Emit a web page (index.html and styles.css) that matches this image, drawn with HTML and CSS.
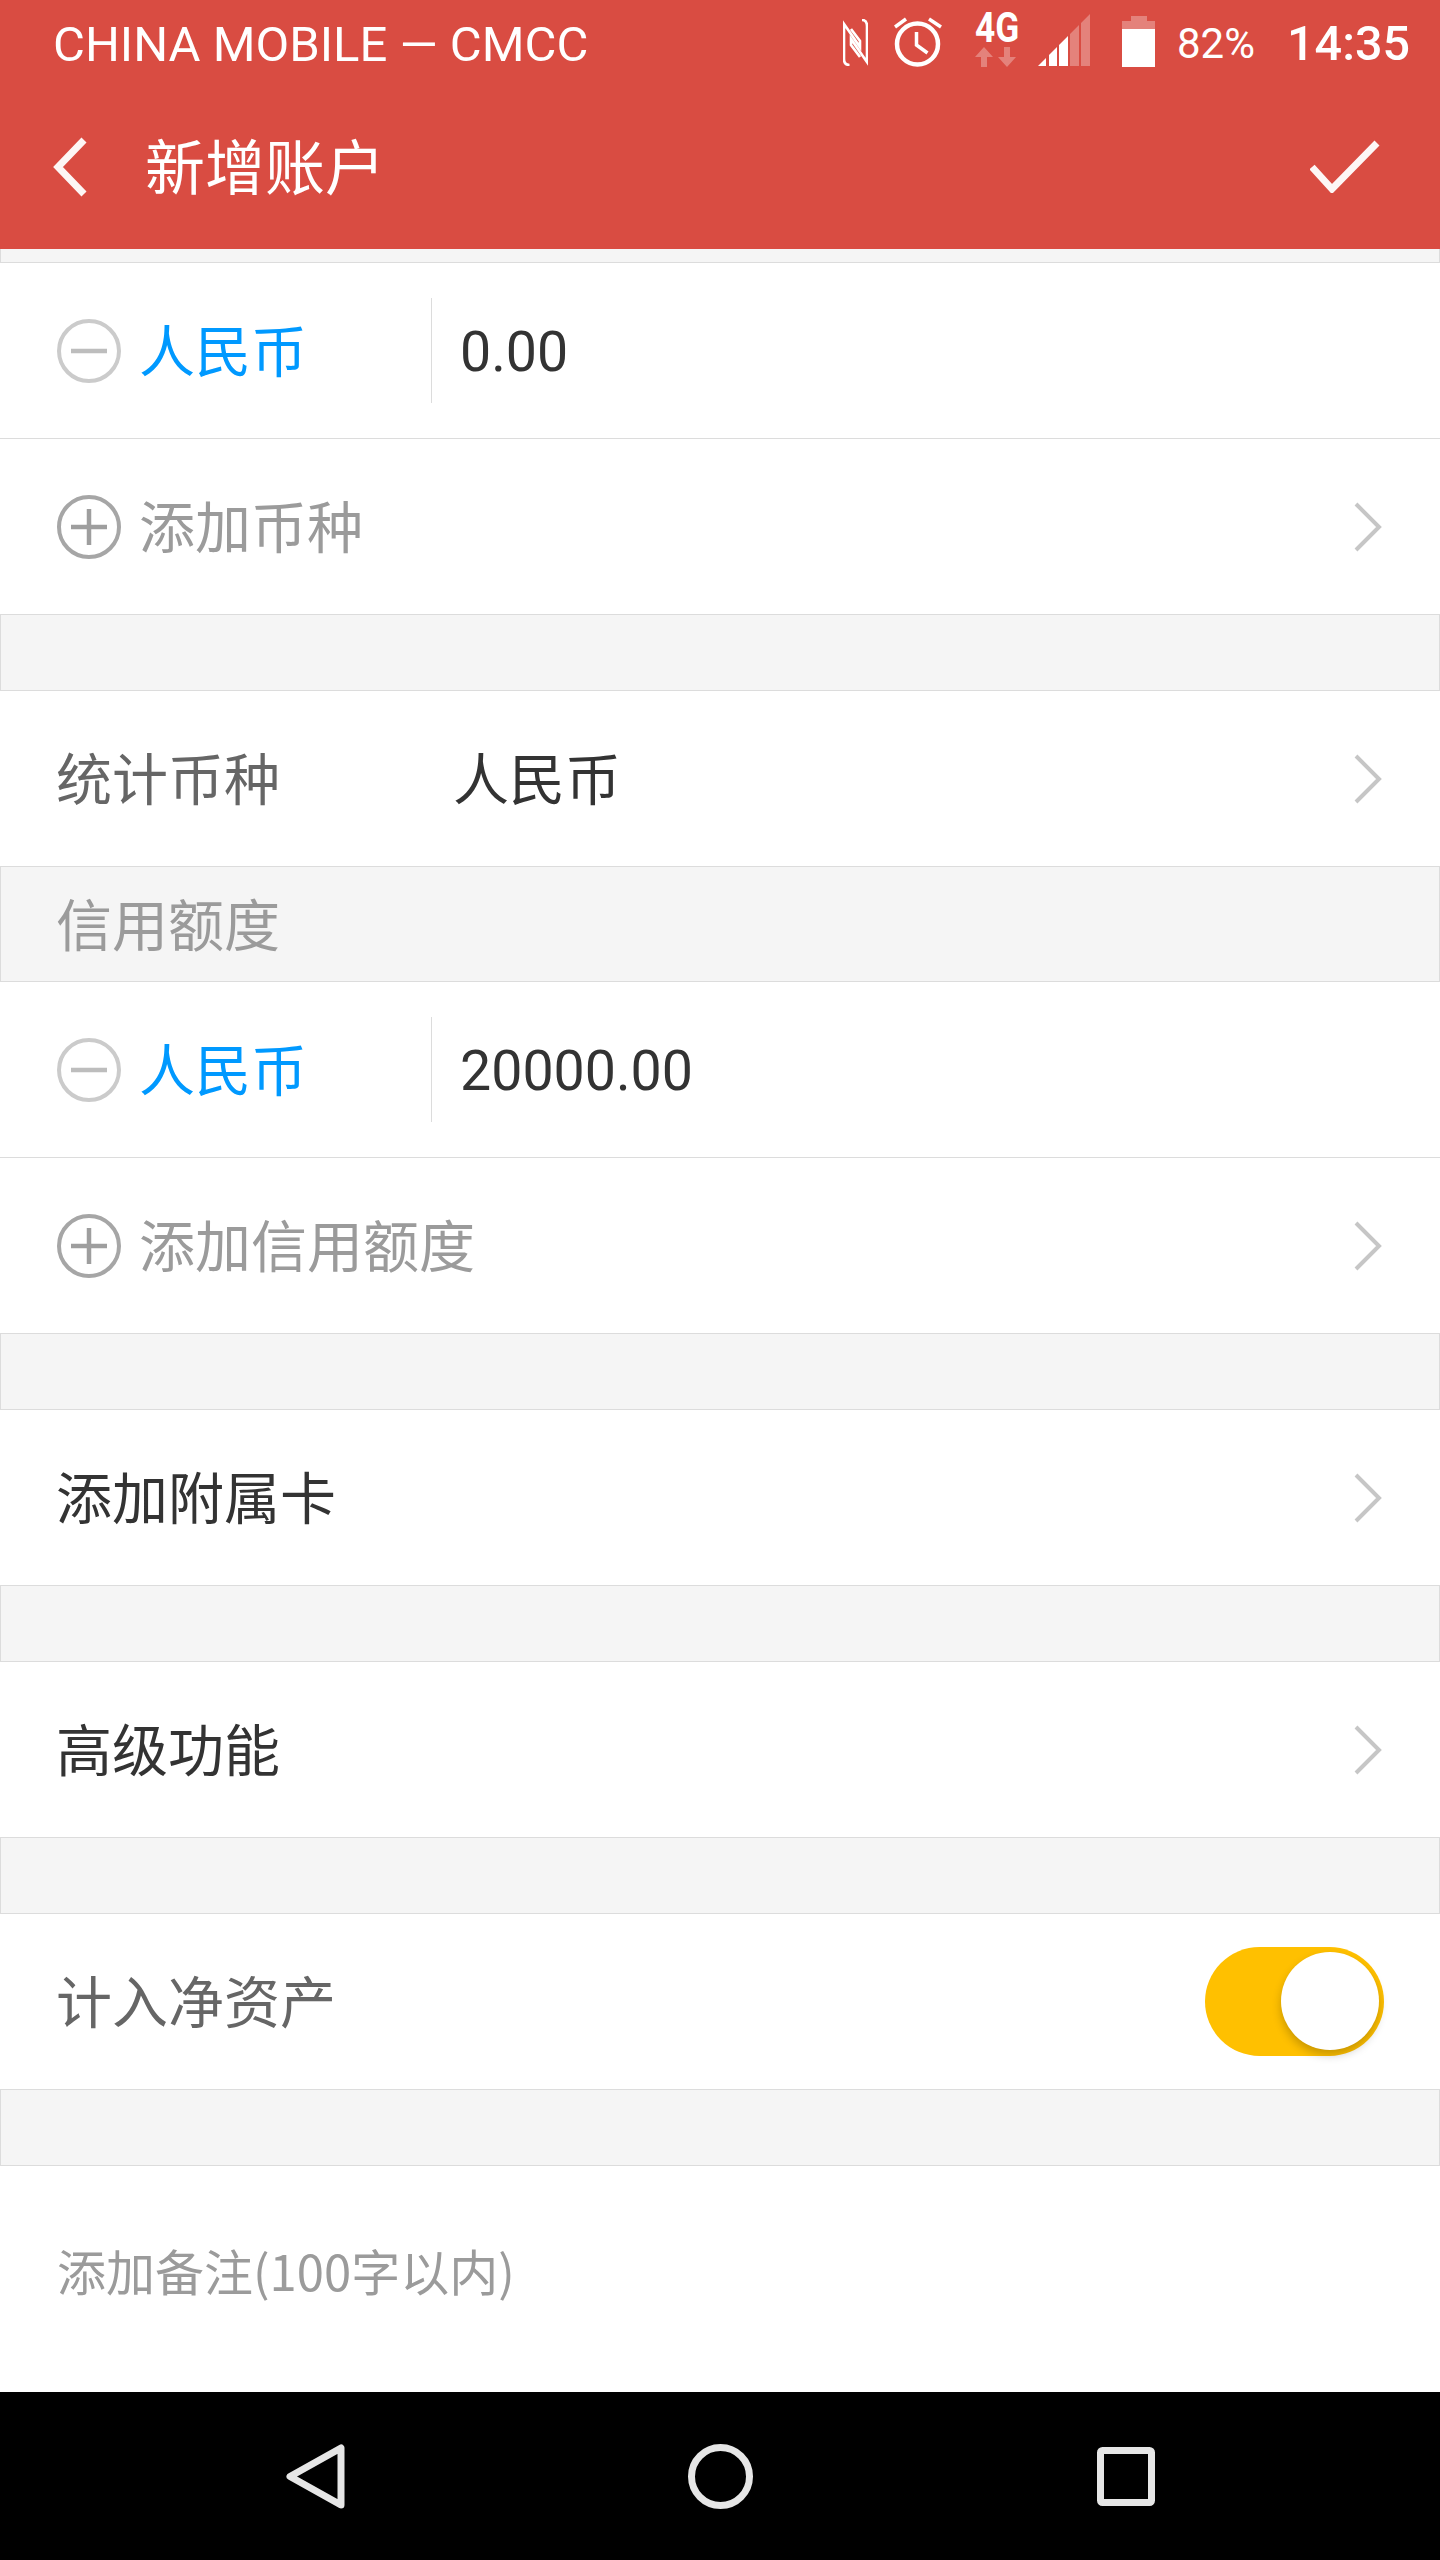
FILE: index.html
```html
<!DOCTYPE html>
<html lang="zh-CN">
<head>
<meta charset="utf-8">
<title>新增账户</title>
<link rel="stylesheet" href="styles.css">
</head>
<body>
<svg class="defs" width="0" height="0" aria-hidden="true">
  <symbol id="chev" viewBox="0 0 30 52"><path d="M3 3L26 26L3 49" fill="none" stroke="#c6c6c6" stroke-width="4"/></symbol>
  <symbol id="minus" viewBox="0 0 64 64"><circle cx="32" cy="32" r="30" fill="none" stroke="#cbcbcb" stroke-width="4"/><path d="M14 32H50" stroke="#bdbdbd" stroke-width="4.500"/></symbol>
  <symbol id="plus" viewBox="0 0 64 64"><circle cx="32" cy="32" r="30" fill="none" stroke="#a6a6a6" stroke-width="4"/><path d="M14 32H50M32 14V50" stroke="#9e9e9e" stroke-width="4.500"/></symbol>
</svg>
<header class="appbar">
  <div class="status">
    <span class="carrier">CHINA MOBILE — CMCC</span>
    <div class="status-right">
      <svg class="ic-nfc" viewBox="0 0 25 47"><path d="M6.500 46Q1 46 1 40V5L17 28V22L8 10M19 1Q24 1 24 7V43L8 20V26L17 38" fill="none" stroke="#fff" stroke-width="2.600"/></svg>
      <svg class="ic-alarm" viewBox="0 0 48 50"><circle cx="23.500" cy="27" r="20.500" fill="none" stroke="#fff" stroke-width="4.500"/><path d="M22.500 15V28L33.500 36M1 10L12 2M35 2L47 10" fill="none" stroke="#fff" stroke-width="3.500"/></svg>
      <div class="net">
        <span class="net-label">4G</span>
        <svg class="ic-arrows" viewBox="0 0 41 20"><path d="M9 0L18 10H12V20H6V10H0ZM32 20L41 10H35V0H29V10H23Z" fill="#fff" opacity=".3"/></svg>
      </div>
      <svg class="ic-signal" viewBox="0 0 52 52"><path d="M0 52L8 44V52ZM11 52V41L19 33V52ZM21 52V31L30 22V52Z" fill="#fff"/><path d="M32 52V20L41 11V52ZM43 52V9L52 0V52Z" fill="#fff" opacity=".3"/></svg>
      <svg class="ic-battery" viewBox="0 0 33 51"><path d="M9 0H25V5H33V13H0V5H9Z" fill="#fff" opacity=".3"/><path d="M0 13H33V51H0Z" fill="#fff"/></svg>
      <span class="pct">82%</span>
      <span class="clock">14:35</span>
    </div>
  </div>
  <div class="toolbar">
    <svg class="ic-back" viewBox="0 0 34 60"><path d="M31 3L5 30L31 57" fill="none" stroke="#fff" stroke-width="7" opacity=".95"/></svg>
    <h1 class="title">新增账户</h1>
    <svg class="ic-check" viewBox="0 0 70 53"><path d="M2 27L22 49L67 3" fill="none" stroke="#fff" stroke-width="7" opacity=".95"/></svg>
  </div>
</header>
<main class="form">
  <div class="band band-top"></div>
  <div class="row">
    <svg class="ic-round"><use href="#minus"/></svg>
    <span class="cur">人民币</span>
    <span class="val">0.00</span>
  </div>
  <div class="row row-sep">
    <svg class="ic-round"><use href="#plus"/></svg>
    <span class="hint">添加币种</span>
    <svg class="chev"><use href="#chev"/></svg>
  </div>
  <div class="band"></div>
  <div class="row">
    <span class="label mid wide">统计币种</span>
    <span class="label dark">人民币</span>
    <svg class="chev"><use href="#chev"/></svg>
  </div>
  <div class="band band-label"><span class="band-text">信用额度</span></div>
  <div class="row">
    <svg class="ic-round"><use href="#minus"/></svg>
    <span class="cur">人民币</span>
    <span class="val">20000.00</span>
  </div>
  <div class="row row-sep">
    <svg class="ic-round"><use href="#plus"/></svg>
    <span class="hint">添加信用额度</span>
    <svg class="chev"><use href="#chev"/></svg>
  </div>
  <div class="band"></div>
  <div class="row">
    <span class="label dark">添加附属卡</span>
    <svg class="chev"><use href="#chev"/></svg>
  </div>
  <div class="band"></div>
  <div class="row">
    <span class="label dark">高级功能</span>
    <svg class="chev"><use href="#chev"/></svg>
  </div>
  <div class="band"></div>
  <div class="row">
    <span class="label mid">计入净资产</span>
    <span class="switch"><span class="knob"></span></span>
  </div>
  <div class="band"></div>
  <div class="note">添加备注(100字以内)</div>
</main>
<nav class="navbar">
  <svg class="nav-back" viewBox="0 0 59 65"><path d="M55 4V61L4 32.500Z" fill="none" stroke="#e6e6e6" stroke-width="7" stroke-linejoin="round"/></svg>
  <svg class="nav-home" viewBox="0 0 67 65"><circle cx="33.500" cy="32.500" r="29" fill="none" stroke="#e6e6e6" stroke-width="7"/></svg>
  <svg class="nav-recent" viewBox="0 0 58 59"><rect x="3.500" y="3.500" width="51" height="52" rx="2" fill="none" stroke="#e6e6e6" stroke-width="7"/></svg>
</nav>
</body>
</html>
```
FILE: styles.css
```css
* { box-sizing: border-box; }
html, body { margin: 0; padding: 0; }
body {
  width: 1440px;
  height: 2560px;
  overflow: hidden;
  display: flex;
  flex-direction: column;
  background: #fff;
  font-family: "Noto Sans CJK SC", Roboto, sans-serif;
}
.defs { position: absolute; }

.appbar { height: 249px; background: #d94c42; color: #fff; flex: none; }
.status { height: 84px; display: flex; align-items: flex-start; padding-left: 53px; font-family: Roboto, sans-serif; }
.carrier { font-size: 49px; line-height: 56px; margin-top: 17px; white-space: nowrap; }
.status-right { margin-left: auto; display: flex; align-items: flex-start; }
.ic-nfc { width: 25px; height: 47px; margin-top: 19px; }
.ic-alarm { width: 48px; height: 50px; margin: 17px 0 0 26px; }
.net { width: 43px; margin: 13px 0 0 33px; display: flex; flex-direction: column; }
.net-label { font-size: 42px; line-height: 30px; height: 34px; font-weight: 700; transform: scaleX(.84); transform-origin: left center; }
.ic-arrows { width: 41px; height: 20px; }
.ic-signal { width: 52px; height: 52px; margin: 14px 0 0 20px; }
.ic-battery { width: 33px; height: 51px; margin: 16px 0 0 32px; }
.pct { font-size: 42px; line-height: 50px; margin: 19px 0 0 22px; width: 77px; white-space: nowrap; }
.clock { font-size: 48.500px; line-height: 56px; font-weight: 500; margin: 16px 30px 0 33px; width: 123px; white-space: nowrap; }

.toolbar { height: 165px; display: flex; align-items: center; padding: 0 60px 0 53px; }
.ic-back { width: 34px; height: 60px; flex: none; }
.title { margin: 0 0 6px 58px; font-size: 60px; line-height: 1; font-weight: 400; }
.ic-check { width: 70px; height: 53px; margin-left: auto; }

.form { flex: 1; display: flex; flex-direction: column; min-height: 0; }
.band { flex: none; height: 77px; background: #f5f5f5; border: 1px solid #dcdcdc; }
.band-top { height: 14px; border-top: 0; }
.band-label { height: 116px; display: flex; align-items: center; padding-left: 55px; font-size: 56px; color: #9b9b9b; }
.band-text { margin-bottom: 5px; }

.row { flex: none; height: 175px; display: flex; align-items: center; padding: 0 57px 0 57px; font-size: 56px; }
.row-sep { height: 176px; border-top: 1px solid #dcdcdc; }
.ic-round { width: 64px; height: 64px; flex: none; margin-right: 18px; }
.cur { color: #0099ff; width: 293px; height: 105px; line-height: 99px; flex: none; border-right: 1px solid #dcdcdc; }
.val { font-family: Roboto, sans-serif; font-size: 55.500px; color: #333; padding-left: 28px; margin-top: 3px; }
.hint { color: #9b9b9b; margin-bottom: 6px; }
.label { white-space: nowrap; margin: 0 0 6px -1px; }
.mid { color: #666; }
.dark { color: #333; }
.wide { width: 398px; flex: none; }
.chev { width: 30px; height: 52px; margin-left: auto; flex: none; }

.switch { margin: 0 -1px 0 auto; width: 179px; height: 109px; border-radius: 55px; background: #ffc000; position: relative; flex: none; }
.knob { position: absolute; top: 5px; right: 5px; width: 98px; height: 98px; border-radius: 50%; background: #fff; box-shadow: 0 5px 10px rgba(0,0,0,.22); }

.note { flex: 1; display: flex; align-items: center; padding: 0 0 19px 57px; font-size: 49px; color: #9b9b9b; }
.navbar { flex: none; height: 168px; background: #000; display: flex; align-items: flex-start; padding: 52px 0 0 286px; }
.nav-back { width: 59px; height: 65px; }
.nav-home { width: 67px; height: 65px; margin-left: 342px; }
.nav-recent { width: 58px; height: 59px; margin: 3px 0 0 343px; }
```
